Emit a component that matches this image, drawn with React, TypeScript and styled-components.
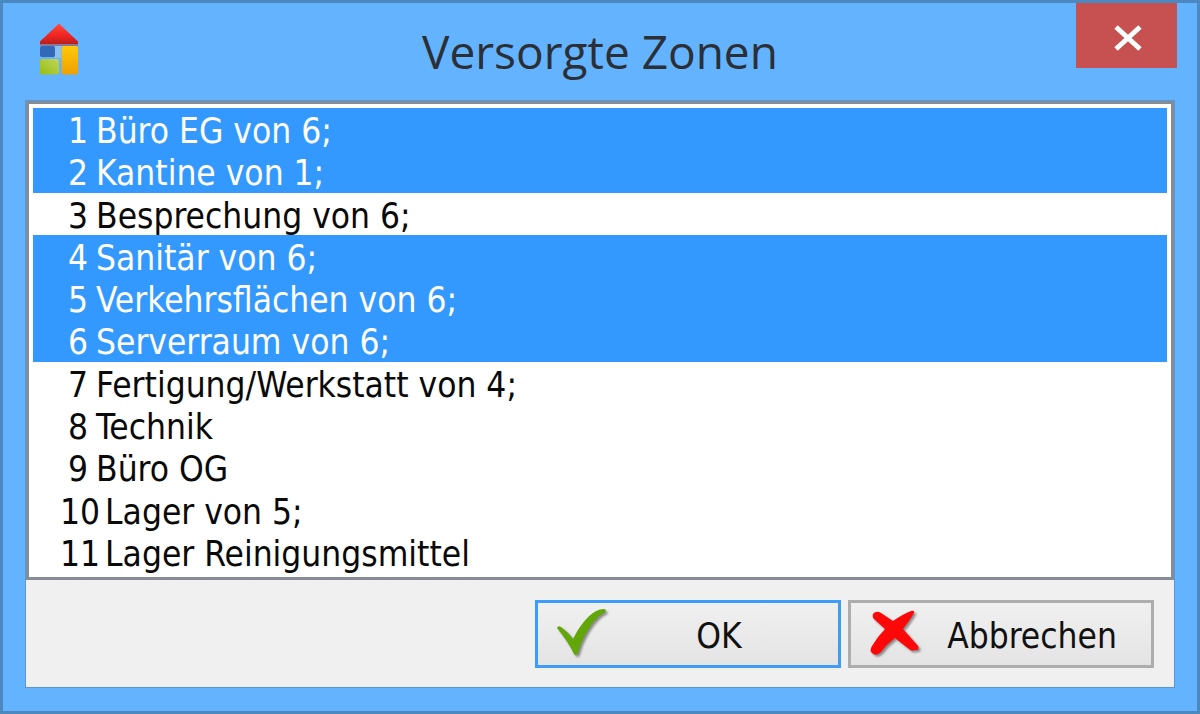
import React, { useState } from "react";
import styled, { createGlobalStyle, css } from "styled-components";

const GlobalStyle = createGlobalStyle`
  *, *::before, *::after { box-sizing: border-box; }
  body { margin: 0; background: #64b3fe; }
`;

const uiFont = css`
  font-family: "DejaVu Sans Condensed", Tahoma, sans-serif;
  font-size: 35px;
  line-height: 38px;
`;

const Window = styled.main`
  display: flex;
  flex-direction: column;
  min-height: 100vh;
  padding: 0 0 23px;
  border: 3px solid #4b89c0;
  background: #64b3fe;
`;

const TitleBar = styled.header`
  display: grid;
  grid-template-columns: 1fr auto 1fr;
  align-items: start;
  height: 97px;
  padding: 0 20px;
`;

const AppIcon = styled.svg`
  display: block;
  width: 44px;
  height: 58px;
  margin: 18px 0 0 14px;
`;

const Title = styled.h1`
  margin: 0;
  padding-top: 18px;
  font-family: "Open Sans", "Segoe UI", sans-serif;
  font-weight: 400;
  font-size: 46px;
  line-height: 60px;
  color: #2b2f36;
`;

const CloseButton = styled.button`
  display: flex;
  align-items: center;
  justify-content: center;
  justify-self: end;
  width: 101px;
  height: 65px;
  padding: 4px 0 0 2px;
  border: 0;
  background: #c75050;
`;

const Client = styled.form`
  flex: 1;
  display: flex;
  flex-direction: column;
  margin: 0 22px;
  border: 1px solid #5798d6;
  background: #f0f0f0;
`;

const ZoneList = styled.div`
  flex: 1;
  display: flex;
  flex-direction: column;
  padding: 4px;
  border: 3px solid #868c95;
  background: #ffffff;
`;

const ZoneRow = styled.label`
  flex: 1;
  display: flex;
  align-items: center;
  padding-top: 4px;
  color: #0a0a0a;
  white-space: nowrap;
  ${uiFont}

  &:has(input:checked) {
    background: #3399ff;
    color: #ffffff;
  }
`;

const ZoneCheck = styled.input`
  appearance: none;
  width: 0;
  height: 0;
  margin: 0;
`;

const ZoneNumber = styled.span<{ $wide: boolean }>`
  padding-left: ${(p) => (p.$wide ? 27 : 35)}px;
  padding-right: ${(p) => (p.$wide ? 5 : 8)}px;
`;

const Footer = styled.footer`
  display: flex;
  justify-content: flex-end;
  gap: 7px;
  padding: 20px 20px 19px;
`;

const DialogButton = styled.button<{ $primary?: boolean }>`
  display: flex;
  align-items: center;
  width: 306px;
  height: 68px;
  padding: 4px 10px 0 16px;
  border: 3px solid ${(p) => (p.$primary ? "#3c9bfb" : "#adadad")};
  background: linear-gradient(#f0f0f0, #e4e4e4);
  color: #111111;
  ${uiFont}
`;

const ButtonIcon = styled.svg`
  flex: none;
  width: 56px;
  height: 54px;
  overflow: visible;
  filter: drop-shadow(2px 2px 1px rgba(60, 60, 60, 0.55));
`;

const ButtonLabel = styled.span`
  flex: 1;
  text-align: center;
`;

const zones = [
  { id: 1, text: "Büro EG von 6;", selected: true },
  { id: 2, text: "Kantine von 1;", selected: true },
  { id: 3, text: "Besprechung von 6;", selected: false },
  { id: 4, text: "Sanitär von 6;", selected: true },
  { id: 5, text: "Verkehrsflächen von 6;", selected: true },
  { id: 6, text: "Serverraum von 6;", selected: true },
  { id: 7, text: "Fertigung/Werkstatt von 4;", selected: false },
  { id: 8, text: "Technik", selected: false },
  { id: 9, text: "Büro OG", selected: false },
  { id: 10, text: "Lager von 5;", selected: false },
  { id: 11, text: "Lager Reinigungsmittel", selected: false },
];

function HouseIcon() {
  return (
    <AppIcon viewBox="0 0 44 58" aria-hidden="true">
      <defs>
        <linearGradient id="roof" x1="0" y1="0" x2="0" y2="1">
          <stop offset="0" stopColor="#ff4a3e" />
          <stop offset="0.6" stopColor="#f02422" />
          <stop offset="1" stopColor="#b8201c" />
        </linearGradient>
        <linearGradient id="door" x1="0" y1="0" x2="0" y2="1">
          <stop offset="0" stopColor="#ffca08" />
          <stop offset="1" stopColor="#eea000" />
        </linearGradient>
        <linearGradient id="lawn" x1="1" y1="0" x2="0" y2="1">
          <stop offset="0" stopColor="#c0d65c" />
          <stop offset="1" stopColor="#98bd10" />
        </linearGradient>
      </defs>
      <path d="M3 23h38v2H3z" fill="#8a7898" />
      <path d="M22 2.500 41 20.500v2.500H3v-2.500z" fill="url(#roof)" />
      <rect x="18" y="25" width="6" height="12" fill="#8cc0f2" />
      <rect x="3" y="25" width="15" height="11" rx="2" fill="#3268b8" />
      <rect x="3" y="38" width="19" height="15.500" rx="2" fill="url(#lawn)" />
      <rect x="24.500" y="25" width="16.500" height="28.500" rx="2" fill="url(#door)" />
    </AppIcon>
  );
}

function CheckIcon() {
  return (
    <ButtonIcon viewBox="1 1 56 54" aria-hidden="true">
      <path
        d="M4 20Q5 17 8 19Q15 24 20 31C27 17 37 4 47 1.500Q53 0 53 3Q52 5 49 6C38 14 29 30 25 45Q23 49 21 46C17 37 11 29 4 20Z"
        fill="#62a60a"
      />
    </ButtonIcon>
  );
}

function CrossIcon() {
  return (
    <ButtonIcon viewBox="-1 0 56 54" aria-hidden="true">
      <path
        d="M5 5Q8 1 13 4L25 12Q35 5 43 2Q47 1 46 4Q42 11 35 20L50 37Q52 42 46 41Q44 43 41 40L27 29Q19 35 13 43Q8 48 4 44Q1 42 4 37Q10 27 17 20L6 10Q4 8 5 5Z"
        fill="#fc0808"
      />
    </ButtonIcon>
  );
}

export default function App() {
  const [selected, setSelected] = useState(
    () => new Set(zones.filter((z) => z.selected).map((z) => z.id))
  );

  const toggle = (id: number) =>
    setSelected((prev) => {
      const next = new Set(prev);
      if (!next.delete(id)) next.add(id);
      return next;
    });

  return (
    <>
      <GlobalStyle />
      <Window>
        <TitleBar>
          <HouseIcon />
          <Title>Versorgte Zonen</Title>
          <CloseButton type="button" aria-label="Schließen">
            <svg width="30" height="26" viewBox="0 0 30 26" aria-hidden="true">
              <path d="M3 2 27 24M27 2 3 24" stroke="#fff" strokeWidth="5" fill="none" />
            </svg>
          </CloseButton>
        </TitleBar>
        <Client onSubmit={(e) => e.preventDefault()}>
          <ZoneList role="group" aria-label="Versorgte Zonen">
            {zones.map((zone) => (
              <ZoneRow key={zone.id}>
                <ZoneCheck
                  type="checkbox"
                  checked={selected.has(zone.id)}
                  onChange={() => toggle(zone.id)}
                />
                <ZoneNumber $wide={zone.id > 9}>{zone.id}</ZoneNumber>
                <span>{zone.text}</span>
              </ZoneRow>
            ))}
          </ZoneList>
          <Footer>
            <DialogButton type="submit" $primary>
              <CheckIcon />
              <ButtonLabel>OK</ButtonLabel>
            </DialogButton>
            <DialogButton type="button">
              <CrossIcon />
              <ButtonLabel>Abbrechen</ButtonLabel>
            </DialogButton>
          </Footer>
        </Client>
      </Window>
    </>
  );
}
